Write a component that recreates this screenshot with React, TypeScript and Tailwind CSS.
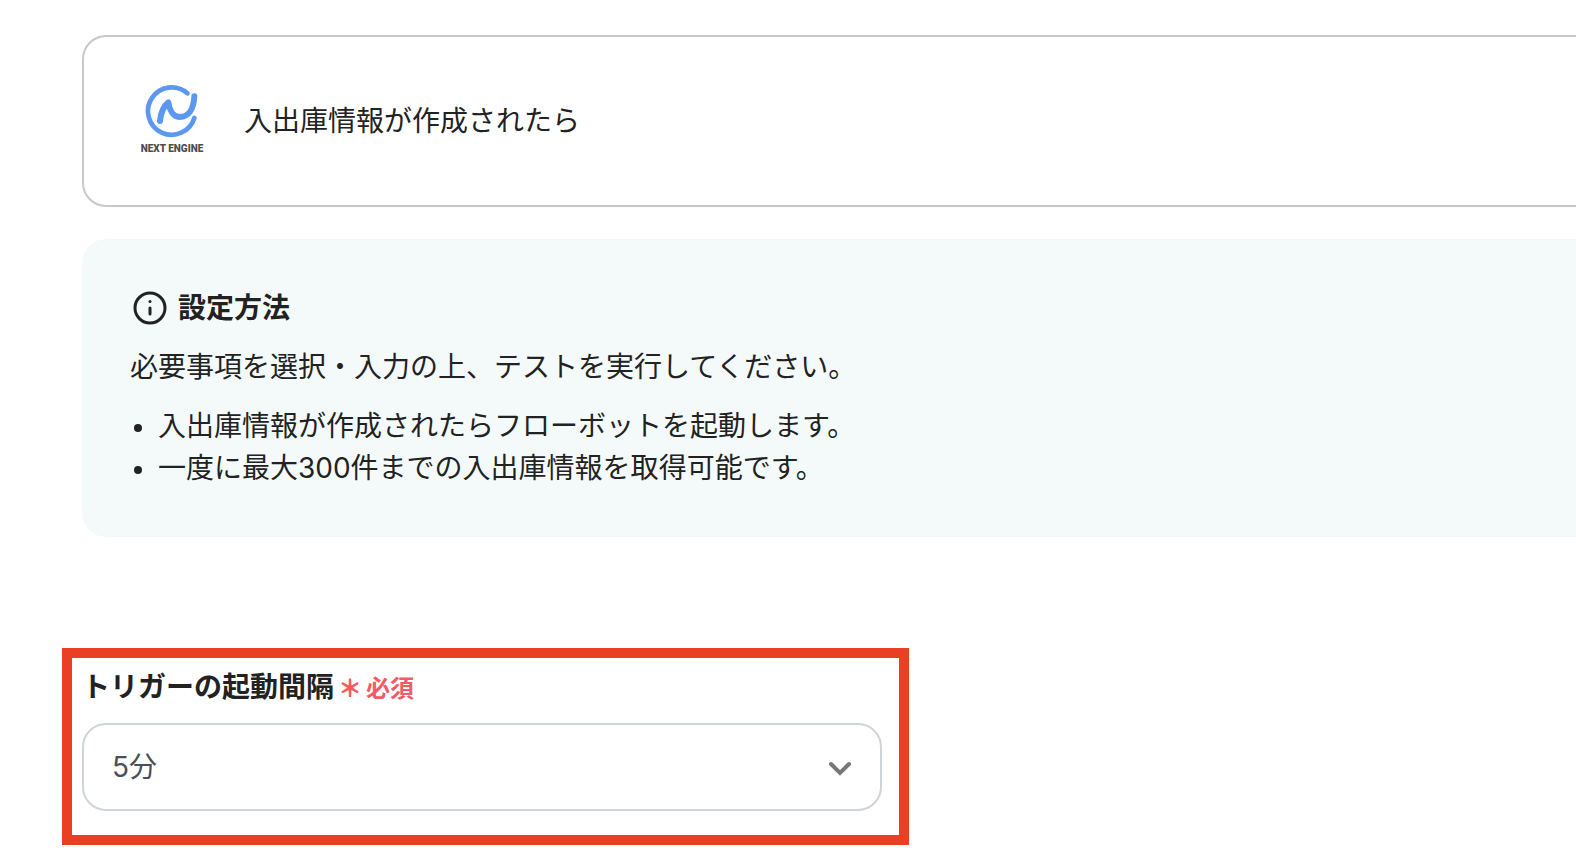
import React, { useState } from 'react';

const intervals = ['5分', '10分', '15分', '30分', '60分'];

const notes = [
  '入出庫情報が作成されたらフローボットを起動します。',
  '一度に最大300件までの入出庫情報を取得可能です。',
];

function NextEngineLogo() {
  return (
    <div className="flex w-20 shrink-0 flex-col items-center">
      <svg
        className="h-14 w-14"
        viewBox="0 0 168 168"
        fill="none"
        stroke="#5a98f2"
        strokeLinecap="round"
        strokeLinejoin="round"
        aria-hidden="true"
      >
        <path d="M130 31A71 71 0 1 0 151 105" strokeWidth="14" />
        <path
          d="M48 114C50 92 57 71 73 58C76 78 86 102 107 102C133 102 149 79 151 40"
          strokeWidth="18"
        />
      </svg>
      <span className="font-['Roboto',sans-serif] text-[10px] leading-5 font-black whitespace-nowrap text-[#4d4d4d]">
        NEXT ENGINE
      </span>
    </div>
  );
}

function InfoIcon() {
  return (
    <svg className="h-10 w-10 shrink-0" viewBox="0 0 40 40" fill="none" aria-hidden="true">
      <circle cx="20" cy="20" r="15" stroke="#222222" strokeWidth="3" />
      <circle cx="20" cy="13.5" r="1.5" fill="#222222" />
      <path d="M20 20V26" stroke="#222222" strokeWidth="3" strokeLinecap="round" />
    </svg>
  );
}

export default function App() {
  const [interval, setInterval] = useState('5分');

  return (
    <main
      lang="ja"
      className="min-h-screen bg-white pt-[35px] pb-4 pl-[82px] font-['Inter','Noto_Sans_CJK_JP',sans-serif] text-[28px] leading-[42px] text-[#222222] [font-optical-sizing:none]"
    >
      <section className="flex items-center gap-8 rounded-l-3xl border-2 border-r-0 border-[#c8c8c8] py-[46px] pl-12">
        <NextEngineLogo />
        <p>入出庫情報が作成されたら</p>
      </section>

      <section className="mt-8 flex flex-col gap-[17px] rounded-l-3xl bg-[#f4fafa] p-12">
        <h2 className="flex h-[42px] items-center gap-2 font-bold">
          <InfoIcon />
          設定方法
        </h2>
        <p>必要事項を選択・入力の上、テストを実行してください。</p>
        <ul>
          {notes.map((note) => (
            <li key={note} className="flex items-center gap-4">
              <span className="ml-1 mt-1 h-2 w-2 shrink-0 rounded-full bg-[#222222]" />
              {note}
            </li>
          ))}
        </ul>
      </section>

      <section className="mt-[111px] -ml-5 max-w-[847px] border-10 border-[#e94025] pt-2 pr-[17px] pb-6 pl-[10px]">
        <label htmlFor="interval" className="flex h-[42px] items-baseline gap-1 font-bold">
          トリガーの起動間隔
          <span className="flex gap-1 text-2xl text-[#f05b65]">
            <span className="font-black">＊</span>
            <span>必須</span>
          </span>
        </label>
        <div className="relative mt-[15px]">
          <select
            id="interval"
            value={interval}
            onChange={(e) => setInterval(e.target.value)}
            className="block h-[88px] w-full appearance-none rounded-3xl border-2 border-[#cfd4d9] bg-white px-7 text-[#495057]"
          >
            {intervals.map((item) => (
              <option key={item}>{item}</option>
            ))}
          </select>
          <svg
            className="pointer-events-none absolute top-8 right-[30px] h-6 w-6"
            viewBox="0 0 24 24"
            fill="none"
            stroke="#777777"
            strokeWidth="4"
            strokeLinecap="round"
            aria-hidden="true"
          >
            <path d="M3 9L12 18L21 9" />
          </svg>
        </div>
      </section>
    </main>
  );
}
